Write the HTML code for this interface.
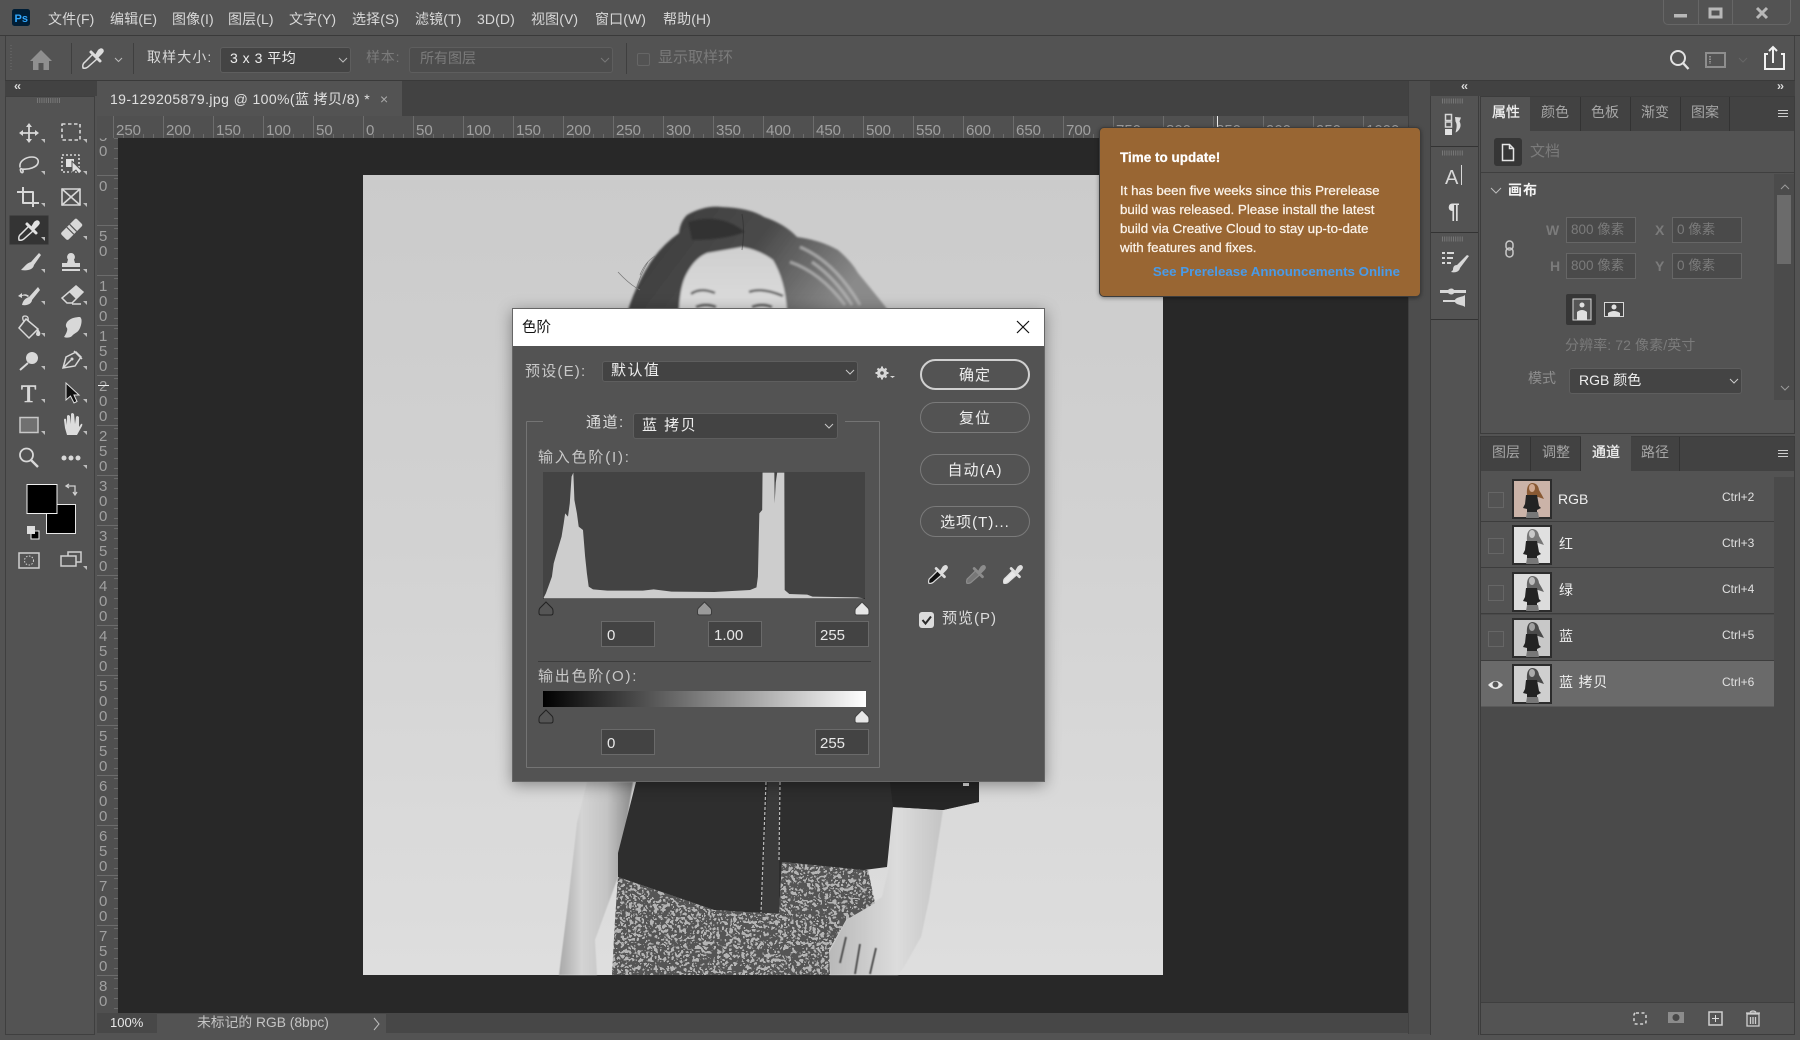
<!DOCTYPE html>
<html lang="zh"><head><meta charset="utf-8"><title>Photoshop</title>
<style>
*{box-sizing:border-box}
html,body{margin:0;padding:0;width:1800px;height:1040px;overflow:hidden;background:#535353}
body{position:relative;font-family:"Liberation Sans","Noto Sans CJK SC",sans-serif;font-size:14px;color:#d8d8d8}
.b{position:absolute}
.t{position:absolute;white-space:nowrap;line-height:20px;height:20px}
.d{color:#7b7b7b}
.in{position:absolute;background:#434343;border:1px solid #6a6a6a;color:#e8e8e8;font-size:15px;line-height:27px;padding-left:5px}
.in.w{padding-left:4px}
.btn{position:absolute;width:110px;height:31px;border:1px solid #7a7a7a;border-radius:16px;text-align:center;line-height:31px;font-size:15px;letter-spacing:1px;color:#eee}
.sel{position:absolute;background:#434343;border:1px solid #5e5e5e;border-radius:3px}
.fld{position:absolute;width:70px;height:26px;background:#4a4a4a;border:1px solid #666;color:#7b7b7b;font-size:13.5px;line-height:23px;padding-left:4px;white-space:nowrap}
svg{position:absolute;overflow:visible}
.row{position:absolute;left:1481px;width:293px;height:46px;background:#535353;border-bottom:1px solid #3d3d3d}
.ck{position:absolute;left:1488px;width:16px;height:16px;border:1px solid #666}
.tab{position:absolute;height:34px;background:#424242;border-right:1px solid #333}
.tip{-webkit-text-stroke:.25px currentColor}
</style></head><body>

<!-- window chrome -->
<div class="b" style="left:0;top:35px;width:1800px;height:1px;background:#3a3a3a"></div>
<div class="b" style="left:5px;top:36px;width:1790px;height:44px;background:#535353;border-left:1px solid #3f3f3f;border-right:1px solid #3f3f3f"></div>
<div class="b" style="left:5px;top:80px;width:1790px;height:1px;background:#3a3a3a"></div>
<div class="b" style="left:1663px;top:0;width:128px;height:25px;border:1px solid #666;border-top:0;border-radius:0 0 5px 5px"></div>
<div class="b" style="left:1698px;top:0;width:1px;height:24px;background:#666"></div>
<div class="b" style="left:1732px;top:0;width:1px;height:24px;background:#666"></div>

<!-- menu -->
<svg style="left:0;top:0" width="40" height="36"><rect x="12" y="9" width="18" height="17" rx="2.5" fill="#001e36"/><text x="14.5" y="22" font-size="11" font-weight="bold" fill="#31a8ff" font-family="Liberation Sans">Ps</text></svg>
<div class="t" style="left:48px;top:9px;letter-spacing:.1px">文件(F)</div>
<div class="t" style="left:110px;top:9px;letter-spacing:.1px">编辑(E)</div>
<div class="t" style="left:172px;top:9px;letter-spacing:.1px">图像(I)</div>
<div class="t" style="left:228px;top:9px;letter-spacing:.1px">图层(L)</div>
<div class="t" style="left:289px;top:9px;letter-spacing:.1px">文字(Y)</div>
<div class="t" style="left:352px;top:9px;letter-spacing:.1px">选择(S)</div>
<div class="t" style="left:415px;top:9px;letter-spacing:.1px">滤镜(T)</div>
<div class="t" style="left:477px;top:9px;letter-spacing:.1px">3D(D)</div>
<div class="t" style="left:531px;top:9px;letter-spacing:.1px">视图(V)</div>
<div class="t" style="left:595px;top:9px;letter-spacing:.1px">窗口(W)</div>
<div class="t" style="left:663px;top:9px;letter-spacing:.1px">帮助(H)</div>

<!-- options bar -->
<div class="b" style="left:71px;top:43px;width:1px;height:31px;background:#3f3f3f"></div>
<div class="b" style="left:133px;top:43px;width:1px;height:31px;background:#3f3f3f"></div>
<div class="b" style="left:626px;top:43px;width:1px;height:31px;background:#3f3f3f"></div>
<div class="t" style="left:147px;top:47px;letter-spacing:1.1px">取样大小:</div>
<div class="sel" style="left:220px;top:47px;width:131px;height:26px;background:#444"></div>
<div class="t" style="left:230px;top:48px;color:#eee;letter-spacing:.5px">3 x 3 平均</div>
<div class="t d" style="left:366px;top:47px;letter-spacing:.8px">样本:</div>
<div class="sel" style="left:409px;top:47px;width:204px;height:26px;background:#4d4d4d"></div>
<div class="t d" style="left:420px;top:48px">所有图层</div>
<div class="b" style="left:637px;top:53px;width:13px;height:13px;border:1px solid #666;border-radius:2px"></div>
<div class="t d" style="left:658px;top:48px;font-size:15px">显示取样环</div>
<svg style="left:0;top:36px" width="1800" height="44">
<g fill="none" stroke="#6e6e6e"><path d="M11 9v26" stroke-dasharray="1 2"/></g>
<path d="M41 14L52 25H49V34H43.5V27H38.5V34H33V25H30Z" fill="#8f8f8f"/>
<g transform="translate(93,22)" fill="none" stroke="#dcdcdc" stroke-width="1.500"><path d="M-10 10Q-11 6-8 4L0-4 4.500.5-4 8Q-7 11-10 10Z"/><path d="M-2-6L7 3" stroke-width="3" stroke-linecap="round"/><path d="M2-3L5-8Q8-11 10-9 12-7 9-4L5 0Z" fill="#dcdcdc" stroke="none"/></g>
<path d="M115 22l3.5 3.5L122 22M339 22l4 4 4-4" fill="none" stroke="#bbb"/>
<path d="M601 22l4 4 4-4" fill="none" stroke="#777"/>
<g fill="none" stroke="#e2e2e2" stroke-width="2"><circle cx="1678" cy="22" r="7"/><path d="M1683 27l5.5 6" stroke-width="2.4"/></g>
<g fill="none" stroke="#8e8e8e" stroke-width="2"><rect x="1706" y="17" width="19" height="14"/></g><path d="M1710 20v8" stroke="#8e8e8e" stroke-width="2" stroke-dasharray="1.5 1"/>
<path d="M1739 22l4 4 4-4" fill="none" stroke="#666"/>
<g fill="none" stroke="#f0f0f0" stroke-width="2"><path d="M1768 18h-3v15h19V18h-3"/><path d="M1773 27V12M1769 15l4-4 4 4"/></g>
</svg>
<svg style="left:0;top:0" width="1800" height="30">
<rect x="1674" y="14" width="13" height="3.5" fill="#b8b8b8"/>
<rect x="1710" y="9" width="11" height="8" fill="none" stroke="#b8b8b8" stroke-width="3"/>
<path d="M1757 8l10 10M1767 8l-10 10" stroke="#b8b8b8" stroke-width="3"/>
</svg>

<!-- left tool panel -->
<div class="b" style="left:5px;top:81px;width:92px;height:15px;background:#424242"></div>
<div class="b" style="left:5px;top:96px;width:90px;height:939px;background:#535353;border:1px solid #3f3f3f"></div>
<div class="t" style="left:14px;top:76px;font-size:12px;font-weight:bold;color:#ddd;letter-spacing:-1px">‹‹</div>

<!-- document area -->
<div class="b" style="left:97px;top:81px;width:1311px;height:35px;background:#424242"></div>
<div class="b" style="left:97px;top:81px;width:305px;height:35px;background:#535353"></div>
<div class="t" style="left:110px;top:89px;color:#e0e0e0;letter-spacing:.4px">19-129205879.jpg @ 100%(蓝 拷贝/8) *</div>
<div class="t" style="left:380px;top:89px;color:#aaa;font-size:14px">×</div>
<div class="b" style="left:118px;top:138px;width:1290px;height:875px;background:#282828"></div>

<!-- rulers -->
<div class="b" style="left:97px;top:116px;width:1311px;height:22px;background:#505050"></div>
<div class="b" style="left:97px;top:138px;width:21px;height:876px;background:#505050"></div>

<!-- picture -->
<svg style="left:363px;top:175px" width="800" height="800" viewBox="363 175 800 800">
<defs>
<linearGradient id="bg" x1="0" y1="0" x2="0" y2="1"><stop offset="0" stop-color="#cbcbcb"/><stop offset=".45" stop-color="#d2d2d2"/><stop offset="1" stop-color="#dedede"/></linearGradient>
<linearGradient id="arm" x1="0" y1="0" x2="1" y2="0"><stop offset="0" stop-color="#a8a8a8"/><stop offset=".3" stop-color="#d4d4d4"/><stop offset=".65" stop-color="#c4c4c4"/><stop offset="1" stop-color="#8a8a8a"/></linearGradient>
<linearGradient id="arm2" x1="0" y1="0" x2="1" y2="0"><stop offset="0" stop-color="#b8b8b8"/><stop offset=".6" stop-color="#dcdcdc"/><stop offset="1" stop-color="#c4c4c4"/></linearGradient>
<linearGradient id="hair" x1="0" y1="0" x2="1" y2=".3"><stop offset="0" stop-color="#3a3a3a"/><stop offset=".55" stop-color="#4a4a4a"/><stop offset="1" stop-color="#8a8a8a"/></linearGradient>
<linearGradient id="face" x1="0" y1="0" x2="0" y2="1"><stop offset="0" stop-color="#cfcfcf"/><stop offset="1" stop-color="#dcdcdc"/></linearGradient>
<filter id="s1"><feGaussianBlur stdDeviation="1"/></filter>
<filter id="s2"><feGaussianBlur stdDeviation=".6"/></filter>
<filter id="leo" x="0" y="0" width="100%" height="100%"><feTurbulence type="fractalNoise" baseFrequency=".24" numOctaves="2" seed="7"/><feColorMatrix values="0 0 0 0 .09 0 0 0 0 .09 0 0 0 0 .09 1.6 0 0 0 -.3"/><feComponentTransfer><feFuncA type="discrete" tableValues="0 0 0 1 1 1 0 0"/></feComponentTransfer><feGaussianBlur stdDeviation=".35"/></filter>
<clipPath id="sk"><path d="M618 877L714 910 761 913H779L782 862 868 870 875 903 846 920 829 950 830 975H612L615 920Z"/></clipPath>
</defs>
<rect x="363" y="175" width="800" height="800" fill="url(#bg)"/>
<!-- hair and face -->
<g filter="url(#s1)">
<path d="M628 310Q636 285 650 263 662 245 679 233 680 222 687 215 705 205 722 207 750 208 764 217 785 224 797 237 820 240 838 250 852 262 858 273 872 290 888 310Z" fill="url(#hair)"/>
<path d="M688 222Q720 212 745 232 725 240 692 240Z" fill="#333"/>
<path d="M800 247Q835 262 860 305M790 262Q820 272 845 305M812 262Q835 278 852 305" stroke="#b8b8b8" stroke-width="3" fill="none" opacity=".75"/>
<path d="M679 310Q680 285 687 273 695 258 707 253L742 247Q760 250 773 260 785 280 787 310Z" fill="url(#face)"/>
<path d="M691 294Q700 287 715 293M749 292Q762 287 783 296" stroke="#5a5a5a" stroke-width="2.500" fill="none"/>
<path d="M696 307q10-4 20 0M752 307q10-4 20 0" stroke="#555" stroke-width="3" fill="none"/>
</g>
<path d="M618 272Q630 285 640 290M648 262Q640 275 636 290M655 256Q645 262 640 275" stroke="#777" stroke-width=".7" fill="none"/>
<path d="M742 250Q745 230 742 214" stroke="#2a2a2a" stroke-width="1" fill="none" opacity=".5"/>
<g filter="url(#s2)">
<path d="M587 782L577 823 568 903 559 975H597L595 940 618 877 633 782Z" fill="url(#arm)"/>
<path d="M893 807L943 810 929 900 921 937 904 967 898 975H830L829 952 846 920 882 897 889 867Z" fill="url(#arm2)"/>
</g>
<!-- skirt -->
<g clip-path="url(#sk)"><rect x="600" y="855" width="300" height="125" fill="#b4b4b4"/><rect x="600" y="855" width="300" height="125" filter="url(#leo)"/></g>
<path d="M846 937l-6 26M860 944l-5 30M876 948l-6 26" stroke="#555" stroke-width="2" fill="none" filter="url(#s2)"/>
<!-- shirt -->
<path d="M586 782L636 782 618 853 618 877 714 910 761 913H779L782 862 864 870 887 867 893 807 943 810 979 802 979 782Z" fill="#2e2e2e"/>
<path d="M768 782H779L779 913H761Z" fill="#3a3a3a"/>
<path d="M766 782L761 913M780 782L779 860" stroke="#bdbdbd" stroke-width="1.2" stroke-dasharray="3 2" fill="none"/>
<path d="M893 807L943 810 979 802 979 782 890 782Z" fill="#262626"/>
<rect x="963" y="783" width="6" height="3" fill="#ddd"/>
</svg>

<!-- ruler marks -->
<svg style="left:0;top:0" width="1410" height="1014" font-family="Liberation Sans" font-size="15" fill="#a0a0a0">
<g>
<text x="99" y="141">5</text><text x="99" y="156">0</text>
<text x="99" y="191">0</text>
<text x="99" y="241">5</text><text x="99" y="256">0</text>
<text x="99" y="291">1</text><text x="99" y="306">0</text><text x="99" y="321">0</text>
<text x="99" y="341">1</text><text x="99" y="356">5</text><text x="99" y="371">0</text>
<text x="99" y="391">2</text><text x="99" y="406">0</text><text x="99" y="421">0</text>
<text x="99" y="441">2</text><text x="99" y="456">5</text><text x="99" y="471">0</text>
<text x="99" y="491">3</text><text x="99" y="506">0</text><text x="99" y="521">0</text>
<text x="99" y="541">3</text><text x="99" y="556">5</text><text x="99" y="571">0</text>
<text x="99" y="591">4</text><text x="99" y="606">0</text><text x="99" y="621">0</text>
<text x="99" y="641">4</text><text x="99" y="656">5</text><text x="99" y="671">0</text>
<text x="99" y="691">5</text><text x="99" y="706">0</text><text x="99" y="721">0</text>
<text x="99" y="741">5</text><text x="99" y="756">5</text><text x="99" y="771">0</text>
<text x="99" y="791">6</text><text x="99" y="806">0</text><text x="99" y="821">0</text>
<text x="99" y="841">6</text><text x="99" y="856">5</text><text x="99" y="871">0</text>
<text x="99" y="891">7</text><text x="99" y="906">0</text><text x="99" y="921">0</text>
<text x="99" y="941">7</text><text x="99" y="956">5</text><text x="99" y="971">0</text>
<text x="99" y="991">8</text><text x="99" y="1006">0</text>
</g>
<g stroke="#6c6c6c"><path d="M97 125.5H118M97 175.5H118M97 225.5H118M97 275.5H118M97 325.5H118M97 375.5H118M97 425.5H118M97 475.5H118M97 525.5H118M97 575.5H118M97 625.5H118M97 675.5H118M97 725.5H118M97 775.5H118M97 825.5H118M97 875.5H118M97 925.5H118M97 975.5H118"/>
<line x1="116" y1="138" x2="116" y2="1013" stroke-width="4" stroke-dasharray="1 9"/></g>
<rect x="97" y="116" width="1311" height="22" fill="#505050"/>
<g stroke="#6c6c6c"><path d="M113.500 116V138M163.500 116V138M213.500 116V138M263.500 116V138M313.500 116V138M363.500 116V138M413.500 116V138M463.500 116V138M513.500 116V138M563.500 116V138M613.500 116V138M663.500 116V138M713.500 116V138M763.500 116V138M813.500 116V138M863.500 116V138M913.500 116V138M963.500 116V138M1013.500 116V138M1063.500 116V138M1113.500 116V138M1163.500 116V138M1213.500 116V138M1263.500 116V138M1313.500 116V138M1363.500 116V138"/>
<line x1="113" y1="136" x2="1408" y2="136" stroke-width="4" stroke-dasharray="1 9"/></g>
<g>
<text x="116" y="135">250</text><text x="166" y="135">200</text><text x="216" y="135">150</text><text x="266" y="135">100</text><text x="316" y="135">50</text><text x="366" y="135">0</text><text x="416" y="135">50</text><text x="466" y="135">100</text><text x="516" y="135">150</text><text x="566" y="135">200</text><text x="616" y="135">250</text><text x="666" y="135">300</text><text x="716" y="135">350</text><text x="766" y="135">400</text><text x="816" y="135">450</text><text x="866" y="135">500</text><text x="916" y="135">550</text><text x="966" y="135">600</text><text x="1016" y="135">650</text><text x="1066" y="135">700</text><text x="1116" y="135">750</text><text x="1166" y="135">800</text><text x="1216" y="135">850</text><text x="1266" y="135">900</text><text x="1316" y="135">950</text><text x="1366" y="135">1000</text>
</g>
<path d="M1217.500 116V127" stroke="#eee"/><path d="M98 385.500H109" stroke="#eee"/>
</svg>

<!-- status bar -->
<div class="b" style="left:97px;top:1013px;width:1311px;height:20px;background:#474747"></div>
<div class="b" style="left:97px;top:1013px;width:60px;height:20px;background:#484848"></div>
<div class="b" style="left:157px;top:1014px;width:229px;height:19px;background:#535353"></div>
<div class="t" style="left:110px;top:1013px;font-size:13px;color:#e8e8e8">100%</div>
<div class="t" style="left:197px;top:1013px;color:#c4c4c4;font-size:13.8px">未标记的 RGB (8bpc)</div>
<svg style="left:0;top:0" width="400" height="1040"><path d="M374 1018l5 6-5 6" fill="none" stroke="#bbb"/></svg>

<!-- gutters and panels -->
<div class="b" style="left:1408px;top:81px;width:22px;height:953px;background:#4d4d4d;border-left:1px solid #404040"></div>
<div class="b" style="left:1430px;top:81px;width:365px;height:15px;background:#424242"></div>
<div class="t" style="left:1461px;top:76px;font-size:12px;font-weight:bold;color:#ddd;letter-spacing:-1px">‹‹</div>
<div class="t" style="left:1777px;top:76px;font-size:12px;font-weight:bold;color:#ddd;letter-spacing:-1px">››</div>
<div class="b" style="left:1430px;top:96px;width:49px;height:939px;background:#535353;border:1px solid #3c3c3c;border-width:0 1px 0 1px"></div>
<div class="b" style="left:1431px;top:146px;width:47px;height:1px;background:#333"></div>
<div class="b" style="left:1431px;top:232px;width:47px;height:1px;background:#333"></div>
<div class="b" style="left:1431px;top:319px;width:47px;height:1px;background:#333"></div>
<div class="b" style="left:1480px;top:96px;width:315px;height:338px;background:#535353;border:1px solid #3c3c3c"></div>
<div class="b" style="left:1480px;top:436px;width:315px;height:599px;background:#4a4a4a;border:1px solid #3c3c3c"></div>

<!-- properties panel tabs -->
<div class="tab" style="left:1481px;top:97px;width:313px;background:#424242;border:0"></div>
<div class="b" style="left:1481px;top:97px;width:49px;height:35px;background:#535353"></div>
<div class="tab" style="left:1531px;top:97px;width:50px"></div><div class="tab" style="left:1581px;top:97px;width:50px"></div><div class="tab" style="left:1631px;top:97px;width:50px"></div><div class="tab" style="left:1681px;top:97px;width:49px"></div>
<div class="t tip" style="left:1492px;top:102px;color:#f2f2f2">属性</div>
<div class="t" style="left:1541px;top:102px;color:#a6a6a6">颜色</div>
<div class="t" style="left:1591px;top:102px;color:#a6a6a6">色板</div>
<div class="t" style="left:1641px;top:102px;color:#a6a6a6">渐变</div>
<div class="t" style="left:1691px;top:102px;color:#a6a6a6">图案</div>
<div class="b" style="left:1481px;top:172px;width:313px;height:1px;background:#3f3f3f"></div>
<div class="b" style="left:1494px;top:138px;width:28px;height:28px;background:#363636;border-radius:3px"></div>
<div class="t d" style="left:1530px;top:142px;font-size:15px">文档</div>
<div class="t" style="left:1508px;top:180px;color:#f4f4f4;font-weight:bold;letter-spacing:1px">画布</div>
<div class="b" style="left:1774px;top:174px;width:20px;height:226px;background:#4b4b4b"></div>
<div class="b" style="left:1777px;top:195px;width:14px;height:69px;background:#6b6b6b"></div>
<div class="t d" style="left:1546px;top:220px;font-weight:bold;font-size:14px">W</div>
<div class="t d" style="left:1550px;top:256px;font-weight:bold;font-size:14px">H</div>
<div class="t d" style="left:1655px;top:220px;font-weight:bold;font-size:14px">X</div>
<div class="t d" style="left:1655px;top:256px;font-weight:bold;font-size:14px">Y</div>
<div class="fld" style="left:1566px;top:217px">800 像素</div>
<div class="fld" style="left:1672px;top:217px">0 像素</div>
<div class="fld" style="left:1566px;top:253px">800 像素</div>
<div class="fld" style="left:1672px;top:253px">0 像素</div>
<div class="b" style="left:1566px;top:294px;width:30px;height:31px;background:#363636;border-radius:2px"></div>
<div class="t d" style="left:1565px;top:335px;font-size:14px;letter-spacing:.1px">分辨率: 72 像素/英寸</div>
<div class="t" style="left:1528px;top:368px;color:#8e8e8e">模式</div>
<div class="sel" style="left:1569px;top:368px;width:173px;height:26px;background:#444"></div>
<div class="t" style="left:1579px;top:370px;color:#eee">RGB 颜色</div>

<!-- channels tabs -->
<div class="tab" style="left:1481px;top:437px;width:313px;border:0"></div>
<div class="tab" style="left:1481px;top:437px;width:50px"></div><div class="tab" style="left:1531px;top:437px;width:50px"></div>
<div class="b" style="left:1581px;top:436px;width:50px;height:36px;background:#535353"></div>
<div class="tab" style="left:1631px;top:437px;width:49px"></div>
<div class="t" style="left:1492px;top:442px;color:#a6a6a6">图层</div>
<div class="t" style="left:1542px;top:442px;color:#a6a6a6">调整</div>
<div class="t tip" style="left:1592px;top:442px;color:#f2f2f2">通道</div>
<div class="t" style="left:1641px;top:442px;color:#a6a6a6">路径</div>

<div class="b" style="left:1481px;top:471px;width:313px;height:6px;background:#535353"></div>
<div class="row" style="top:476px"></div>
<div class="row" style="top:522px"></div>
<div class="row" style="top:568px"></div>
<div class="row" style="top:615px"></div>
<div class="row" style="top:661px;background:#6a6a6a;border-color:#5a5a5a"></div>
<div class="ck" style="top:492px"></div><div class="ck" style="top:538px"></div><div class="ck" style="top:585px"></div><div class="ck" style="top:631px"></div>
<div class="t" style="left:1558px;top:489px;color:#eee">RGB</div>
<div class="t" style="left:1559px;top:534px;color:#eee">红</div>
<div class="t" style="left:1559px;top:580px;color:#eee">绿</div>
<div class="t" style="left:1559px;top:626px;color:#eee">蓝</div>
<div class="t" style="left:1559px;top:672px;color:#eee;letter-spacing:.8px">蓝 拷贝</div>
<div class="t" style="left:1722px;top:487px;font-size:12px;color:#e0e0e0">Ctrl+2</div>
<div class="t" style="left:1722px;top:533px;font-size:12px;color:#e0e0e0">Ctrl+3</div>
<div class="t" style="left:1722px;top:579px;font-size:12px;color:#e0e0e0">Ctrl+4</div>
<div class="t" style="left:1722px;top:625px;font-size:12px;color:#e0e0e0">Ctrl+5</div>
<div class="t" style="left:1722px;top:672px;font-size:12px;color:#e0e0e0">Ctrl+6</div>
<div class="b" style="left:1481px;top:1002px;width:313px;height:32px;background:#535353;border-top:1px solid #3f3f3f"></div>

<!-- right side icons -->
<svg style="left:0;top:0" width="1800" height="1040">
<defs>
<symbol id="woman" viewBox="0 0 38 38" overflow="hidden">
<path d="M14 15Q13 4 19 3 25 3 26 10 29 15 31 19L25 17Z" fill="var(--h)"/>
<ellipse cx="19" cy="8" rx="3" ry="4" fill="var(--s)"/>
<path d="M13 15L24 15 26 26 28 28 24 30V33H14V29L10 28 12 24Z" fill="#232323"/>
<path d="M14 32H25L26 38H13Z" fill="#777"/>
</symbol>
</defs>
<path d="M37 100.500h24" stroke="#777" stroke-width="5" stroke-dasharray="1 1.200" fill="none"/>
<path d="M1442 101h22M1442 153h22M1442 239h22" stroke="#777" stroke-width="5" stroke-dasharray="1 1.200" fill="none"/>
<!-- dock: history -->
<g fill="none" stroke="#d6d6d6" stroke-width="1.500"><rect x="1445.500" y="114.500" width="6" height="6"/><rect x="1445.500" y="122" width="6" height="5"/></g>
<rect x="1445" y="129" width="7" height="6" fill="#e2e2e2"/>
<path d="M1455 117l6 .5-1.500 4c3 5-1 10-4 11 1-4 2-8 0-11z" fill="#dcdcdc"/>
<!-- dock: char -->
<text x="1445" y="184" font-size="20" fill="#d8d8d8" font-family="Liberation Sans">A</text><path d="M1461.500 165v20" stroke="#d8d8d8"/>
<text x="1448" y="218" font-size="21" fill="#e0e0e0" font-weight="bold" font-family="Liberation Sans">¶</text>
<!-- dock: brush settings -->
<g fill="#d8d8d8"><path d="M1442 252h3v2h-3zM1442 257h3v2h-3zM1442 262h3v2h-3zM1447 252h7v2h-7zM1447 257h6v2h-6zM1447 262h4v2h-4z"/>
<path d="M1467 255l-10 10c-3 0-4 2-4 5l-2 2c4 1 8 0 9-4l9-12z"/>
<!-- dock: brush presets -->
<path d="M1440 290h8c2-2 5-2 6 0h12v3h-12c-1 2-4 2-6 0h-8zM1443 300h12c1-3 8-3 10-5v12c-2-2-9-2-10-5h-12z"/></g>

<!-- panel chrome icons -->
<path d="M1778 110.500h10M1778 113.500h10M1778 116.500h10M1778 450.500h10M1778 453.500h10M1778 456.500h10" stroke="#cfcfcf"/>
<path d="M1502.500 144.500h7l4 4v12h-11zM1509.500 144.500v4h4" fill="none" stroke="#e4e4e4" stroke-width="1.500"/>
<path d="M1491 188l5 5 5-5" fill="none" stroke="#bdbdbd"/>
<path d="M1781 189l4-4 4 4M1781 386l4 4 4-4" fill="none" stroke="#9a9a9a"/>
<g fill="none" stroke="#c8c8c8" stroke-width="1.500"><rect x="1506" y="241" width="7" height="9" rx="3.500"/><rect x="1506" y="248" width="7" height="9" rx="3.500"/></g>
<rect x="1573" y="299" width="18" height="21" fill="#555" stroke="#d8d8d8"/><circle cx="1582" cy="305" r="2.500" fill="#e0e0e0"/><path d="M1577 320v-8q5-4 10 0v8z" fill="#e0e0e0"/>
<rect x="1604.500" y="302.500" width="19" height="14" fill="#444" stroke="#d8d8d8"/><circle cx="1614" cy="307" r="2.500" fill="#e0e0e0"/><path d="M1608 316v-3q6-4 12 0v3z" fill="#e0e0e0"/>
<path d="M1730 379l4 4 4-4" fill="none" stroke="#ccc"/>

<!-- thumbnails -->
<g stroke="#2c2c2c" stroke-width="2">
<rect x="1513" y="480" width="38" height="38" fill="#cbb3a8"/>
<rect x="1513" y="526" width="38" height="38" fill="#e0e0e0"/>
<rect x="1513" y="573" width="38" height="38" fill="#dcdcdc"/>
<rect x="1513" y="619" width="38" height="38" fill="#c8c8c8"/>
<rect x="1513" y="665" width="38" height="38" fill="#cfcfcf"/>
</g>
<use href="#woman" x="1513" y="480" width="38" height="38" style="--h:#8a5a34;--s:#d0a890"/>
<use href="#woman" x="1513" y="526" width="38" height="38" style="--h:#777;--s:#c8c8c8"/>
<use href="#woman" x="1513" y="573" width="38" height="38" style="--h:#666;--s:#bbb"/>
<use href="#woman" x="1513" y="619" width="38" height="38" style="--h:#4a4a4a;--s:#a0a0a0"/>
<use href="#woman" x="1513" y="665" width="38" height="38" style="--h:#4a4a4a;--s:#aaa"/>
<path d="M1488 685q8-8 15 0-7 8-15 0z" fill="#e8e8e8"/><circle cx="1495.500" cy="684.500" r="3" fill="#555"/>

<!-- footer icons -->
<rect x="1634" y="1013" width="12" height="11" rx="2" fill="none" stroke="#d4d4d4" stroke-width="1.500" stroke-dasharray="3 2.500"/>
<rect x="1668" y="1012" width="16" height="11" fill="#8c8c8c"/><circle cx="1676" cy="1017.500" r="3.500" fill="#484848"/>
<rect x="1709" y="1012" width="13" height="13" fill="none" stroke="#cfcfcf" stroke-width="1.500"/><path d="M1712 1018.500h7M1715.500 1015v7" stroke="#dcdcdc"/>
<path d="M1747 1014h12v12h-12zM1746 1013h14M1750 1012q3-2 6 0M1750.500 1017v7M1753 1017v7M1755.500 1017v7" fill="none" stroke="#cfcfcf" stroke-width="1.300"/>

<!-- tools -->
<g fill="none" stroke="#d8d8d8" stroke-width="1.600" stroke-linecap="round" stroke-linejoin="round">
<g transform="translate(29,133)"><path d="M0-8V8M-8 0H8" stroke-width="1.800"/><path d="M-3-6L0-10 3-6ZM-3 6L0 10 3 6ZM-6-3L-10 0-6 3ZM6-3L10 0 6 3Z" fill="#d8d8d8" stroke="none"/></g>
<rect x="62" y="124" width="18" height="16" stroke-dasharray="3.500 2.500" stroke-linecap="butt"/>
<g transform="translate(29,165)"><path d="M-9 2C-10-4-3-8 3-8 8-8 10-5 9-2 8 2 0 5-7 4-9 3-9 5-8 7-6 9-5 6-7 4"/></g>
<g transform="translate(71,164)"><rect x="-9" y="-9" width="17" height="17" stroke-dasharray="2 2" stroke-linecap="butt"/><rect x="-5" y="-5" width="8" height="8" fill="#e2e2e2" stroke="none"/><path d="M1-3L1 9 5 6 8 10 11 7Z" fill="#e2e2e2" stroke="#535353" stroke-width="1"/></g>
<g transform="translate(29,197)"><path d="M-6-10V6H10M-12-5H4V10" stroke-width="2" stroke-linecap="butt"/></g>
<g transform="translate(71,197)"><rect x="-9" y="-8" width="18" height="16"/><path d="M-9-8L9 8M9-8L-9 8"/></g>
</g>
<rect x="9.500" y="215.500" width="39" height="29" rx="1" fill="#343434" stroke="#444"/>
<g transform="translate(29,230)" fill="none" stroke="#e2e2e2" stroke-width="1.500"><path d="M-10 10Q-11 6-8 4L0-4 4.500.5-4 8Q-7 11-10 10Z"/><path d="M-2-6L7 3" stroke-width="3" stroke-linecap="round"/><path d="M2-3L5-8Q8-11 10-9 12-7 9-4L5 0Z" fill="#e2e2e2" stroke="none"/></g>
<g fill="#d8d8d8">
<g transform="translate(71,230) rotate(-45)"><rect x="-10" y="-5" width="22" height="10" rx="2"/><path d="M-1-5v10M3-5v10" stroke="#535353" stroke-width="1.200"/></g>
<path d="M39 253L31 262C27 263 25 266 21 270 27 271 33 270 34 265L41 255Z"/>
<path d="M71 253a4 4 0 0 1 3 6.500l1 3.500h5v4H62v-4h5l1-3.500a4 4 0 0 1 3-6.500ZM62 269h18v2H62Z"/>
<path d="M38 287L29 297C26 298 23 300 22 305 28 306 32 303 32 300L40 290Z"/>
<path d="M18 296l4-3 0 2q4-2 7 1l-1 1q-3-2-6-1l0 2Z"/>
<path d="M76 286L83 292 72 303H67L62 298Z" fill="none" stroke="#d8d8d8" stroke-width="1.500"/><path d="M76 286L83 292 76 299 69 292Z"/><path d="M72 304H81" stroke="#d8d8d8" stroke-width="1.500"/>
<path d="M26 319L38 329 29 338 19 328Z" fill="none" stroke="#d8d8d8" stroke-width="1.500"/><path d="M24 322q-3-6 1-6t3 5" fill="none" stroke="#d8d8d8" stroke-width="1.300"/><path d="M38 329c2 3 3 4 2 6-1 2-4 1-4-1 0-1 1-3 2-5Z"/>
<path d="M80 317c3 2 1 9 0 11-2 5-6 5-8 8-2 2-6 2-8 1 2-3 4-7 3-9-2-2-1-5 1-7 3-3 8-4 12-4Z"/>
<circle cx="32" cy="358" r="6"/><path d="M28 363L20 370" stroke="#d8d8d8" stroke-width="2" fill="none"/>
<path d="M63 368L66 357 76 352 81 357 75 366ZM63 368L71 360M74 351L82 359" fill="none" stroke="#d8d8d8" stroke-width="1.500"/>
<circle cx="72" cy="359" r="1.500"/>
</g>
<text x="21" y="402" font-family="Liberation Serif" font-size="25" fill="#d8d8d8" stroke="#d8d8d8" stroke-width=".6">T</text>
<path d="M66 383L66 400 70.500 396 74 403 77 401.500 74 395 79 395Z" fill="#111" stroke="#e0e0e0" stroke-width="1"/>
<rect x="20" y="417.500" width="18" height="15" fill="#707070" stroke="#c8c8c8" stroke-width="1.500"/>
<path d="M65 428L64 420Q64 418 66 419L67 425 67 416Q68 414 70 416L71 424 71 414Q72 412 74 414L75 424 76 417Q77 415 79 417L79 427 81 424Q83 423 82 426L77 435H67Z" fill="#dcdcdc"/>
<circle cx="26.500" cy="455" r="6.500" fill="none" stroke="#d8d8d8" stroke-width="1.800"/><path d="M31 460L38 467" stroke="#d8d8d8" stroke-width="2.400"/>
<g fill="#d8d8d8"><circle cx="64" cy="458" r="2.500"/><circle cx="71" cy="458" r="2.500"/><circle cx="78" cy="458" r="2.500"/></g>
<g fill="#bcbcbc"><path d="M45 143v-4h-4ZM87 143v-4h-4ZM45 175v-4h-4ZM87 175v-4h-4ZM45 207v-4h-4ZM87 207v-4h-4ZM45 241v-4h-4ZM87 240v-4h-4ZM45 273v-4h-4ZM87 273v-4h-4ZM45 305v-4h-4ZM87 305v-4h-4ZM45 337v-4h-4ZM87 337v-4h-4ZM45 370v-4h-4ZM87 370v-4h-4ZM45 403v-4h-4ZM87 403v-4h-4ZM45 435v-4h-4ZM87 435v-4h-4ZM87 469v-4h-4ZM87 570v-4h-4Z"/></g>
<rect x="46.500" y="504.500" width="29" height="29" fill="#000" stroke="#e8e8e8" stroke-width="1"/>
<rect x="27" y="484.500" width="30" height="29" fill="#000" stroke="#f0f0f0" stroke-width="1"/>
<path d="M67 486h8v8M69 484l-3 2 3 2M73 492l2 3 2-3" fill="none" stroke="#d0d0d0" stroke-width="1.300"/>
<rect x="31" y="531" width="8" height="8" fill="#000" stroke="#eee"/><rect x="27" y="526" width="8" height="8" fill="#ddd"/>
<rect x="19" y="553" width="20" height="15" fill="none" stroke="#cfcfcf" stroke-width="1.500"/><circle cx="29" cy="560.500" r="4.500" fill="none" stroke="#cfcfcf" stroke-dasharray="1.500 1.500"/>
<path d="M61 556h7v-4h13v10h-5M61 556v10h15v-10H61Z" fill="none" stroke="#cfcfcf" stroke-width="1.500"/>
</svg>

<!-- Levels dialog -->
<div class="b" style="left:512px;top:308px;width:533px;height:474px;background:#535353;border:1px solid #666;box-shadow:0 3px 14px rgba(0,0,0,.38)"></div>
<div class="b" style="left:513px;top:309px;width:531px;height:37px;background:#fff"></div>
<div class="t" style="left:522px;top:318px;color:#111;font-size:14.5px">色阶</div>
<div class="t" style="left:525px;top:362px;font-size:15px;letter-spacing:1.200px;color:#c8c8c8">预设(E):</div>
<div class="sel" style="left:602px;top:361px;width:256px;height:21px"></div>
<div class="t" style="left:611px;top:361px;font-size:15px;letter-spacing:1.500px;color:#eee">默认值</div>
<div class="b" style="left:526px;top:421px;width:354px;height:347px;border:1px solid #747474;border-radius:1px"></div>
<div class="b" style="left:543px;top:418px;width:302px;height:6px;background:#535353"></div>
<div class="t" style="left:586px;top:413px;font-size:15px;letter-spacing:1.500px;color:#dcdcdc">通道:</div>
<div class="sel" style="left:633px;top:413px;width:205px;height:26px"></div>
<div class="t" style="left:642px;top:416px;font-size:15px;letter-spacing:1.500px;color:#eee">蓝 拷贝</div>
<div class="t" style="left:538px;top:448px;font-size:15px;letter-spacing:1.800px;color:#c8c8c8">输入色阶(I):</div>
<div class="b" style="left:543px;top:472px;width:322px;height:127px;background:#434343;border-bottom:1px solid #2e2e2e"></div>
<svg style="left:543px;top:472px" width="322" height="127" viewBox="120 516 902 381" preserveAspectRatio="none">
<path fill="#cdcdcd" d="M122 893L128 880 135 860 145 830 150 790 158 760 165 735 172 710 178 670 182 640 190 650 195 610 200 530 205 518 208 600 215 640 220 680 232 690 238 770 243 820 248 860 260 868 300 872 400 872 430 868 480 875 600 876 700 870 718 862 722 830 726 640 734 630 735 518 768 518 769 610 772 548 776 518 796 518 797 870 810 882 860 884 875 890 1000 892 1020 895 122 895Z"/>
</svg>
<div class="in" style="left:601px;top:621px;width:54px;height:26px">0</div>
<div class="in" style="left:708px;top:621px;width:54px;height:26px">1.00</div>
<div class="in w" style="left:815px;top:621px;width:54px;height:26px">255</div>
<div class="b" style="left:538px;top:661px;width:333px;height:1px;background:#3c3c3c"></div>
<div class="t" style="left:538px;top:667px;font-size:15px;letter-spacing:1.800px;color:#c8c8c8">输出色阶(O):</div>
<div class="b" style="left:543px;top:691px;width:323px;height:16px;background:linear-gradient(90deg,#000,#fff)"></div>
<div class="in" style="left:601px;top:729px;width:54px;height:26px">0</div>
<div class="in w" style="left:815px;top:729px;width:54px;height:26px">255</div>
<div class="btn" style="left:920px;top:359px;border:2px solid #d0d0d0;line-height:29px">确定</div>
<div class="btn" style="left:920px;top:402px">复位</div>
<div class="btn" style="left:920px;top:454px">自动(A)</div>
<div class="btn" style="left:920px;top:506px">选项(T)...</div>
<div class="b" style="left:919px;top:612px;width:15px;height:16px;background:#dcdcdc;border-radius:3px"></div>
<div class="t" style="left:942px;top:609px;font-size:15px;letter-spacing:1px;color:#dcdcdc">预览(P)</div>

<svg style="left:0;top:0" width="1800" height="1040">
<path d="M1017 321l12 12M1029 321l-12 12" stroke="#111" stroke-width="1.200"/>
<path d="M846 370l4 4 4-4M825 424l4 4 4-4" fill="none" stroke="#c8c8c8"/>
<g transform="translate(882,373)"><circle r="3.500" fill="none" stroke="#d8d8d8" stroke-width="3"/><path d="M0-6.500V6.500M-6.500 0H6.500M-4.500-4.500L4.500 4.500M4.500-4.500L-4.500 4.500" stroke="#d8d8d8" stroke-width="2"/><circle r="1.800" fill="#535353"/></g>
<path d="M890 376h5l-2.500 2z" fill="#d8d8d8"/>
<g stroke-width="1">
<path transform="translate(546,602)" d="M0 0L6 6Q7 7 7 9V11Q7 13 5 13H-5Q-7 13-7 11V9Q-7 7-6 6Z" fill="#555" stroke="#222"/>
<path transform="translate(704.500,602)" d="M0 0L6 6Q7 7 7 9V11Q7 13 5 13H-5Q-7 13-7 11V9Q-7 7-6 6Z" fill="#9a9a9a" stroke="#3c3c3c"/>
<path transform="translate(862,602)" d="M0 0L6 6Q7 7 7 9V11Q7 13 5 13H-5Q-7 13-7 11V9Q-7 7-6 6Z" fill="#e6e6e6" stroke="#444"/>
<path transform="translate(546,710)" d="M0 0L6 6Q7 7 7 9V11Q7 13 5 13H-5Q-7 13-7 11V9Q-7 7-6 6Z" fill="#555" stroke="#222"/>
<path transform="translate(862,710)" d="M0 0L6 6Q7 7 7 9V11Q7 13 5 13H-5Q-7 13-7 11V9Q-7 7-6 6Z" fill="#e6e6e6" stroke="#444"/>
</g>
<!-- dialog droppers -->
<g transform="translate(938,574) scale(.92)"><path d="M-10 10Q-11 6-8 4L0-4 4.500.5-4 8Q-7 11-10 10Z" fill="#111" stroke="#ddd" stroke-width="1.300"/><path d="M-2-6L7 3" stroke="#ddd" stroke-width="3" stroke-linecap="round"/><path d="M2-3L5-8Q8-11 10-9 12-7 9-4L5 0Z" fill="#ddd"/></g>
<g transform="translate(976,574) scale(.92)"><path d="M-10 10Q-11 6-8 4L0-4 4.500.5-4 8Q-7 11-10 10Z" fill="#777" stroke="#8c8c8c" stroke-width="1.300"/><path d="M-2-6L7 3" stroke="#8c8c8c" stroke-width="3" stroke-linecap="round"/><path d="M2-3L5-8Q8-11 10-9 12-7 9-4L5 0Z" fill="#8c8c8c"/></g>
<g transform="translate(1013,574) scale(.92)"><path d="M-10 10Q-11 6-8 4L0-4 4.500.5-4 8Q-7 11-10 10Z" fill="#e8e8e8" stroke="#ddd" stroke-width="1.300"/><path d="M-2-6L7 3" stroke="#ddd" stroke-width="3" stroke-linecap="round"/><path d="M2-3L5-8Q8-11 10-9 12-7 9-4L5 0Z" fill="#ddd"/></g>
<path d="M922.500 620l3 3.500 5.500-7" fill="none" stroke="#2a2a2a" stroke-width="2"/>
</svg>

<!-- update tooltip -->
<div class="b" style="left:1099px;top:127px;width:322px;height:170px;background:#996633;border:1px solid #3c3c3c;border-radius:5px;box-shadow:0 1px 4px rgba(0,0,0,.4)"></div>
<div class="t tip" style="left:1120px;top:148px;font-size:13.5px;font-weight:bold;color:#fff">Time to update!</div>
<div class="t tip" style="left:1120px;top:181px;font-size:13.35px;color:#fbf3ea">It has been five weeks since this Prerelease</div>
<div class="t tip" style="left:1120px;top:200px;font-size:13.35px;color:#fbf3ea">build was released. Please install the latest</div>
<div class="t tip" style="left:1120px;top:219px;font-size:13.35px;color:#fbf3ea">build via Creative Cloud to stay up-to-date</div>
<div class="t tip" style="left:1120px;top:238px;font-size:13.35px;color:#fbf3ea">with features and fixes.</div>
<div class="t" style="left:1100px;width:300px;text-align:right;top:262px;font-size:13.3px;font-weight:bold;color:#4a9be8">See Prerelease Announcements Online</div>
</body></html>
